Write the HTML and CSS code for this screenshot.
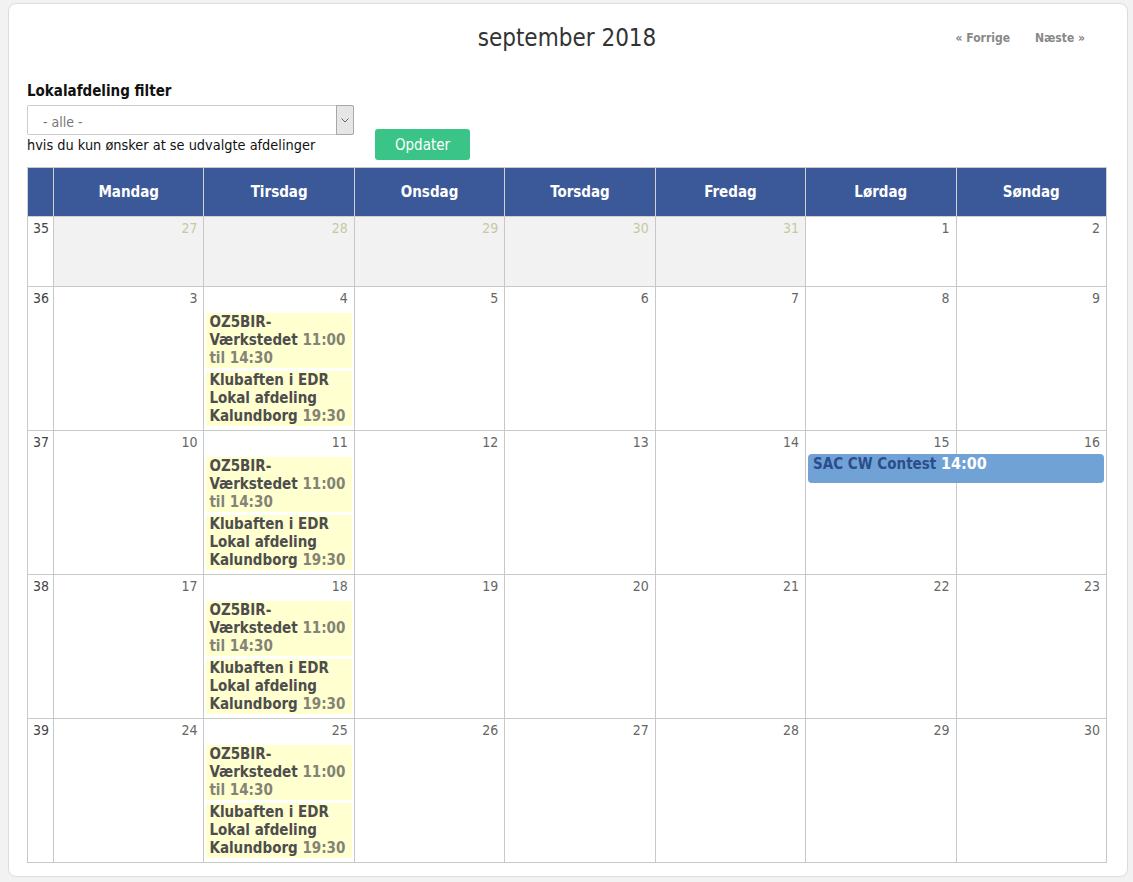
FILE: index.html
```html
<!DOCTYPE html>
<html lang="da">
<head>
  <meta charset="UTF-8">
  <title>Kalender</title>
  <link rel="stylesheet" href="styles.css">
</head>
<body>
  <div class="calendar-box">
    <div class="cal-top">
      <div></div>
      <h2 class="cal-title">september 2018</h2>
      <div class="cal-nav">
        <a href="#">« Forrige</a>
        <a href="#">Næste »</a>
      </div>
    </div>

    <form class="filter">
      <div class="filter-field">
        <label class="filter-label" for="afd">Lokalafdeling filter</label>
        <div class="select">
          <select id="afd">
            <option>- alle -</option>
          </select>
          <span class="select-arrow">
            <svg width="8" height="5" viewBox="0 0 8 5"><path d="M0.5 0.5 L4 4 L7.5 0.5" fill="none" stroke="#666" stroke-width="1"/></svg>
          </span>
        </div>
        <div class="filter-hint">hvis du kun ønsker at se udvalgte afdelinger</div>
      </div>
      <button type="button" class="btn-update">Opdater</button>
    </form>

    <table class="month">
      <colgroup>
        <col class="col-week">
        <col><col><col><col><col><col><col>
      </colgroup>
      <thead>
        <tr>
          <th></th>
          <th>Mandag</th>
          <th>Tirsdag</th>
          <th>Onsdag</th>
          <th>Torsdag</th>
          <th>Fredag</th>
          <th>Lørdag</th>
          <th>Søndag</th>
        </tr>
      </thead>
      <tbody>
        <tr class="short">
          <td class="week">35</td>
          <td class="other"><div class="num">27</div></td>
          <td class="other"><div class="num">28</div></td>
          <td class="other"><div class="num">29</div></td>
          <td class="other"><div class="num">30</div></td>
          <td class="other"><div class="num">31</div></td>
          <td><div class="num">1</div></td>
          <td><div class="num">2</div></td>
        </tr>
        <tr>
          <td class="week">36</td>
          <td><div class="num">3</div></td>
          <td>
            <div class="num">4</div>
            <div class="event">OZ5BIR-Værkstedet <span class="time">11:00 til 14:30</span></div>
            <div class="event">Klubaften i EDR Lokal afdeling Kalundborg <span class="time">19:30</span></div>
          </td>
          <td><div class="num">5</div></td>
          <td><div class="num">6</div></td>
          <td><div class="num">7</div></td>
          <td><div class="num">8</div></td>
          <td><div class="num">9</div></td>
        </tr>
        <tr>
          <td class="week">37</td>
          <td><div class="num">10</div></td>
          <td>
            <div class="num">11</div>
            <div class="event">OZ5BIR-Værkstedet <span class="time">11:00 til 14:30</span></div>
            <div class="event">Klubaften i EDR Lokal afdeling Kalundborg <span class="time">19:30</span></div>
          </td>
          <td><div class="num">12</div></td>
          <td><div class="num">13</div></td>
          <td><div class="num">14</div></td>
          <td class="has-span">
            <div class="num">15</div>
            <div class="event-long">SAC CW Contest <span class="time">14:00</span></div>
          </td>
          <td><div class="num">16</div></td>
        </tr>
        <tr>
          <td class="week">38</td>
          <td><div class="num">17</div></td>
          <td>
            <div class="num">18</div>
            <div class="event">OZ5BIR-Værkstedet <span class="time">11:00 til 14:30</span></div>
            <div class="event">Klubaften i EDR Lokal afdeling Kalundborg <span class="time">19:30</span></div>
          </td>
          <td><div class="num">19</div></td>
          <td><div class="num">20</div></td>
          <td><div class="num">21</div></td>
          <td><div class="num">22</div></td>
          <td><div class="num">23</div></td>
        </tr>
        <tr>
          <td class="week">39</td>
          <td><div class="num">24</div></td>
          <td>
            <div class="num">25</div>
            <div class="event">OZ5BIR-Værkstedet <span class="time">11:00 til 14:30</span></div>
            <div class="event">Klubaften i EDR Lokal afdeling Kalundborg <span class="time">19:30</span></div>
          </td>
          <td><div class="num">26</div></td>
          <td><div class="num">27</div></td>
          <td><div class="num">28</div></td>
          <td><div class="num">29</div></td>
          <td><div class="num">30</div></td>
        </tr>
      </tbody>
    </table>
  </div>
</body>
</html>
```

FILE: styles.css
```css
body {
  margin: 3px 5px 5px 8px;
  background-color: #f2f2f2;
  font-family: "DejaVu Sans Condensed", "DejaVu Sans", Verdana, sans-serif;
  font-size: 14px;
  color: #333;
}
.calendar-box {
  height: 874px;
  box-sizing: border-box;
  background-color: white;
  border: 1px solid #dcdcdc;
  border-radius: 8px;
  padding: 17px 20px 14px 18px;
}
.cal-top {
  display: grid;
  grid-template-columns: 1fr auto 1fr;
  align-items: center;
  height: 34px;
}
.cal-title {
  margin: 0;
  font-size: 24px;
  font-weight: normal;
  line-height: 34px;
  color: #333;
}
.cal-nav {
  display: flex;
  justify-content: flex-end;
  gap: 25px;
  padding-right: 22px;
}
.cal-nav a {
  font-size: 12px;
  font-weight: bold;
  color: #888;
  text-decoration: none;
}
.filter {
  display: flex;
  align-items: flex-end;
  gap: 21px;
  margin-top: 26px;
  margin-bottom: 7px;
}
.filter-field {
  padding-bottom: 5px;
}
.filter-label {
  display: block;
  font-size: 15px;
  font-weight: bold;
  line-height: 20px;
  color: #111;
  margin-bottom: 4px;
}
.select {
  display: flex;
  width: 327px;
  height: 30px;
  box-sizing: border-box;
  border: 1px solid #ccc;
  border-radius: 2px;
}
.select select {
  flex: 1;
  appearance: none;
  border: none;
  background: white;
  font-family: inherit;
  font-size: 14px;
  color: #777;
  padding: 4px 0 0 15px;
  outline: none;
}
.select-arrow {
  width: 16px;
  display: flex;
  align-items: center;
  justify-content: center;
  background-color: #e6e6e6;
  border: 1px solid #a8a8a8;
  margin: -1px -1px -1px 0;
  border-radius: 0 2px 2px 0;
}
.filter-hint {
  font-size: 14.4px;
  line-height: 20px;
  color: #111;
}
.btn-update {
  width: 95px;
  height: 31px;
  border: none;
  border-radius: 3px;
  background-color: #3bc487;
  color: white;
  font-family: inherit;
  font-size: 15px;
  cursor: pointer;
}
.month {
  width: 1080px;
  table-layout: fixed;
  border-collapse: collapse;
  border: 1px solid #c8c8c8;
}
.col-week {
  width: 26px;
}
.month th {
  height: 48px;
  padding: 0;
  background-color: #3b5998;
  color: white;
  font-size: 15px;
  font-weight: bold;
  border: 1px solid #d0d0d0;
  border-top-color: #c8c8c8;
}
.month td {
  vertical-align: top;
  border: 1px solid #c8c8c8;
  padding: 3px 2px;
  height: 137px;
}
.month tr.short td {
  height: 63px;
}
.month td.week {
  padding: 3px 0 0 5px;
  color: #444;
}
.num {
  text-align: right;
  line-height: 16px;
  padding-right: 4px;
  margin-bottom: 7px;
  color: #666;
}
.month td.other {
  background-color: #f2f2f2;
}
.other .num {
  color: #c8c8a2;
}
.event {
  margin-top: 3px;
  padding: 0 2px 1px 3px;
  background-color: #ffffcf;
  border-radius: 2px;
  font-size: 15px;
  font-weight: bold;
  line-height: 18px;
  color: #4d4d4d;
}
.event .time {
  color: #838378;
}
.has-span {
  position: relative;
}
.event-long {
  position: absolute;
  top: 23px;
  left: 2px;
  width: 296px;
  height: 29px;
  box-sizing: border-box;
  padding: 1px 5px;
  background-color: #70a2d6;
  border-radius: 4px;
  font-size: 15px;
  font-weight: bold;
  line-height: 18px;
  color: #2c4d8c;
}
.event-long .time {
  font-size: 16px;
  color: white;
}
```
